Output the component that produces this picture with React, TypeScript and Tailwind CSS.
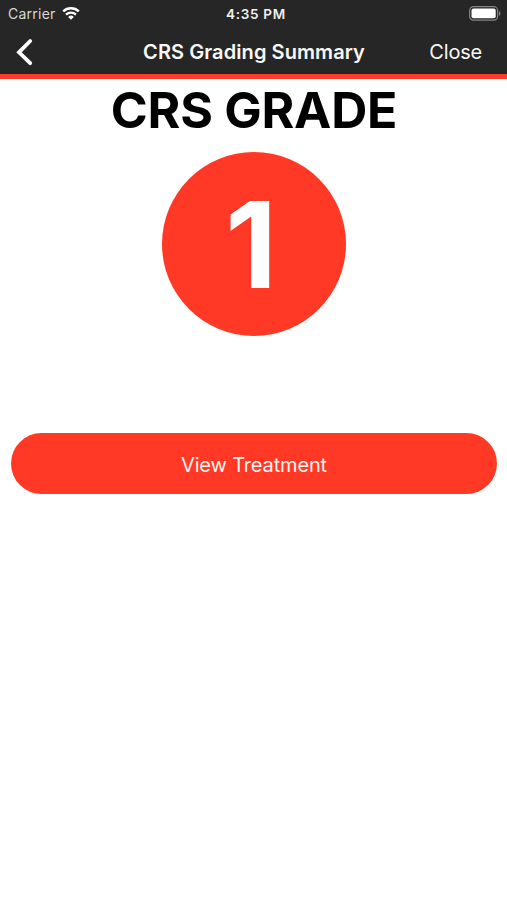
const StatusBar: React.FC = () => {
  return (
    <div className="grid h-7 grid-cols-3 items-center pl-2 pr-[6px] text-[#d8d8d8]">
      <div className="flex items-center gap-[6px] pb-px">
        <span className="text-[14px] tracking-[0.25px]">Carrier</span>
        <svg width="18" height="13" viewBox="0 0 18 13" fill="none" stroke="#fff">
          <path d="M1.2 4.4a11.3 11.3 0 0 1 15.6 0" strokeWidth="2.4" />
          <path d="M4 7.6a7.2 7.2 0 0 1 10 0" strokeWidth="2.2" />
          <path d="M6.2 9.9a4 4 0 0 1 5.6 0L9 12.8Z" fill="#fff" stroke="none" />
        </svg>
      </div>
      <span className="pl-[3px] text-center text-[13.5px] font-semibold tracking-[0.7px] text-[#f0f0f0]">
        4:35 PM
      </span>
      <svg className="mb-px justify-self-end" width="32" height="15" viewBox="0 0 32 15">
        <rect x="0.6" y="0.7" width="28" height="13.4" rx="3.8" fill="none" stroke="#858585" strokeWidth="1.2" />
        <rect x="2.5" y="2.6" width="24.2" height="9.6" rx="2" fill="#fff" />
        <path d="M30 5c1.900.8 1.900 4 0 4.800Z" fill="#858585" />
      </svg>
    </div>
  );
};

const NavBar: React.FC = () => {
  return (
    <div className="grid h-[46px] grid-cols-[100px_1fr_100px] items-center pt-[2px] text-[#f8f8f8]">
      <button className="pl-4">
        <svg width="17" height="28" viewBox="0 0 17 28" fill="none">
          <path
            d="M14.200 3 3 14.300l11.200 10.900"
            stroke="#fff"
            strokeWidth="3.8"
            strokeLinecap="round"
          />
        </svg>
      </button>
      <h1 className="pl-px text-center text-[20px] font-semibold tracking-[0.08px]">
        CRS Grading Summary
      </h1>
      <button className="pr-[25px] text-right text-[20px] tracking-[-0.2px]">Close</button>
    </div>
  );
};

const App: React.FC = () => {
  return (
    <div className="flex min-h-screen flex-col bg-white font-['Inter','Liberation_Sans',sans-serif]">
      <header className="border-b-[5px] border-[#ff3b29] bg-[#262626]">
        <StatusBar />
        <NavBar />
      </header>
      <main className="flex flex-col items-center pr-[10px] pl-[11px]">
        <h2 className="mt-px text-[50px] leading-[60px] font-bold tracking-[-0.25px] text-black">
          CRS GRADE
        </h2>
        <div className="mt-3 flex size-[184px] items-center justify-center rounded-full bg-[#ff3925] pt-px pr-[6px] text-[120px] font-bold text-white">
          1
        </div>
        <button className="mt-[97px] h-[61px] w-full rounded-full bg-[#ff3925] pt-[2px] text-[20px] tracking-[-0.15px] text-[#fff2f0]">
          View Treatment
        </button>
      </main>
    </div>
  );
};

export default App;
